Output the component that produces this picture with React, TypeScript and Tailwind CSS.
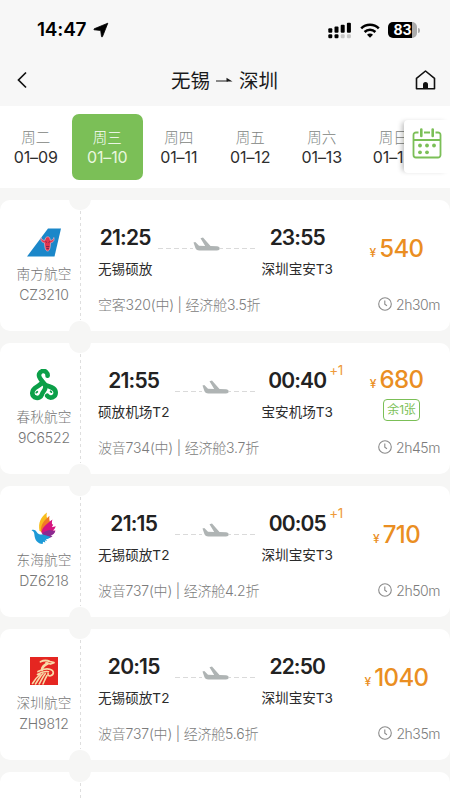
import { ReactNode } from "react";
import clsx from "clsx";

const days = [
  { week: "周二", date: "01–09" },
  { week: "周三", date: "01–10" },
  { week: "周四", date: "01–11" },
  { week: "周五", date: "01–12" },
  { week: "周六", date: "01–13" },
  { week: "周日", date: "01–14" },
];

const SouthernLogo = () => (
  <svg width="34" height="29" viewBox="0 0 34 29">
    <path d="M21 0.5H34L27.5 28.5H0Z" fill="#1b87c9" />
    <path
      d="M14.2 9.5c.2 2 1.8 3 3.6 2.8l1-2.6c1.2-1.2 2.8-1.2 3.8 0l.8 2.6c1.8.2 3.2-1 3.4-2.8 1 2.8-.6 4.9-3.2 5.3l-.4 4.2c-.6 3-1.4 4-2.6 4s-2.2-1-2.7-4l-.5-4.2c-2.7-.4-4.2-2.5-3.2-5.3Z"
      fill="#e2364f"
      stroke="#f3bfcd"
      strokeWidth="0.6"
    />
    <path d="M18.5 13.5l1.5 1M23 13.5l-1.5 1M19 18.5h3.4M19.5 20.5h2.4" stroke="#6b2347" strokeWidth="0.8" />
  </svg>
);

const SpringLogo = () => (
  <svg width="28" height="32" viewBox="0 0 28 32" fill="none" stroke="#0b9f48" strokeWidth="4.6" strokeLinecap="round">
    <path d="M17.6 6.8A4.3 4.3 0 1 0 9.7 8.6C10.8 11 13.5 13.2 15.2 16" />
    <path d="M11.3 14.3C9 18 2.5 17.8 2.3 23.8A4.9 4.9 0 0 0 11.8 25.7C12.3 22.8 15.8 21.5 15.5 17" />
    <path d="M14.5 15.5C18.5 18 25.7 17.5 25.7 23.8A4.8 4.8 0 0 1 17.2 26.8" />
    <path d="M7.3 22.8l-1 .8M20.6 22.3l.8.8" strokeWidth="1.8" />
  </svg>
);

const DonghaiLogo = () => (
  <svg width="26" height="33" viewBox="0 0 26 33">
    <path d="M8.5 19C7 11 9.500 5 16 .5c-.8 3-.5 5 1 7L11 20Z" fill="#f8bd1c" />
    <path d="M10 20C9.5 13 12.5 9 18.5 3.8c-.6 3.2 0 5 .9 6.7L13.5 21Z" fill="#f07a25" />
    <path d="M10.5 21c.5-6 4.5-8.5 10.900-13.500-.6 3.2-1 4.6.8 5.2l-1.4 2.5 4-1c-1 2.5-1.6 3.2-3 4.3l2.7.1C23 22.5 20 23.5 16 24Z" fill="#d5147f" />
    <path d="M11 21.5c2.5-2 5-3 8-3.500l5.200 1.200c-.9 2.600-2.600 3.800-4.700 4.300l2 .6c-2 2.300-5 2.400-8.500 1.400Z" fill="#8b2a90" />
    <path d="M.5 18.2c2-1 4-.3 5.200 1.700 1.500 2.300 3.300 3 6.300 2.600l7.500 2.200c-1 1.600-2.300 2.400-4.500 2.400l1 1.600-2.300-.3.700 2.200-2.400-.9-.3 2.300C6.500 31.500 3.800 28.500 3.300 22c-.2-1.800-.9-2.800-2.800-3.800Z" fill="#1d9ad7" />
  </svg>
);

const ShenzhenLogo = () => (
  <svg width="28" height="28" viewBox="0 0 28 28">
    <path d="M0 0h28v28H0Z" fill="#e52621" />
    <g fill="none" stroke="#f8d9a6" strokeLinecap="round" strokeLinejoin="round">
      <path d="M10.5 4.8c3-1.6 6-1.9 9.5-.3l4 1.2-3.5 1.3-4.5-1.2" strokeWidth="1.8" />
      <path d="M17.5 6.5c-3.300 1.800-5.600 3.600-5.400 6.200" strokeWidth="2.6" />
      <path d="M8 14.5c4-2 9-3.200 12.500-2 4.200 1.500 3.200 5.500.2 6.200-2 .4-3.200-.8-2.600-2.200" strokeWidth="1.7" />
      <path d="M7.5 17.5c4-2.700 8-3.400 11-2.800M13 16.500c-3 2.500-4.500 6-7.500 10.500M15.200 16.700c-2.200 2.800-3.700 6.300-6 10.300M17 18.500c-1.500 2.500-2.500 5-4 8.500M10 17.500C7 20 4.500 23 2.500 26.500" strokeWidth="1.6" />
    </g>
  </svg>
);

interface Flight {
  logo: ReactNode;
  airline: string;
  code: string;
  depTime: string;
  depPort: string;
  arrTime: string;
  arrPort: string;
  nextDay?: boolean;
  info: string;
  duration: string;
  price: string;
  left?: string;
}

const flights: Flight[] = [
  {
    logo: <SouthernLogo />,
    airline: "南方航空",
    code: "CZ3210",
    depTime: "21:25",
    depPort: "无锡硕放",
    arrTime: "23:55",
    arrPort: "深圳宝安T3",
    info: "空客320(中) | 经济舱3.5折",
    duration: "2h30m",
    price: "540",
  },
  {
    logo: <SpringLogo />,
    airline: "春秋航空",
    code: "9C6522",
    depTime: "21:55",
    depPort: "硕放机场T2",
    arrTime: "00:40",
    arrPort: "宝安机场T3",
    nextDay: true,
    info: "波音734(中) | 经济舱3.7折",
    duration: "2h45m",
    price: "680",
    left: "余1张",
  },
  {
    logo: <DonghaiLogo />,
    airline: "东海航空",
    code: "DZ6218",
    depTime: "21:15",
    depPort: "无锡硕放T2",
    arrTime: "00:05",
    arrPort: "深圳宝安T3",
    nextDay: true,
    info: "波音737(中) | 经济舱4.2折",
    duration: "2h50m",
    price: "710",
  },
  {
    logo: <ShenzhenLogo />,
    airline: "深圳航空",
    code: "ZH9812",
    depTime: "20:15",
    depPort: "无锡硕放T2",
    arrTime: "22:50",
    arrPort: "深圳宝安T3",
    info: "波音737(中) | 经济舱5.6折",
    duration: "2h35m",
    price: "1040",
  },
];

const StatusBar = () => (
  <div className="flex h-[54px] shrink-0 items-center justify-between pl-[37px] pr-[30px] pt-[6px]">
    <div className="flex items-center gap-[7px]">
      <span className="text-[19px] font-semibold leading-6 tracking-[-0.2px] text-black">14:47</span>
      <svg width="16" height="16" viewBox="0 0 16 16">
        <path
          d="M14.8 1.2 9.5 14.6c-.2.5-.9.4-1-.1L7.7 8.5 1.3 7.8c-.5-.1-.6-.8-.1-1Z"
          fill="#000"
          stroke="#000"
          strokeWidth="0.8"
          strokeLinejoin="round"
        />
      </svg>
    </div>
    <div className="flex items-center gap-[8px]">
      <svg width="24" height="17" viewBox="0 0 24 17">
        <rect x="0.3" y="6.2" width="4" height="4.6" rx="1" />
        <rect x="6.5" y="4.5" width="4" height="6.3" rx="1" />
        <rect x="12.7" y="2.7" width="4" height="8.1" rx="1" />
        <rect x="18.9" y="0.7" width="4" height="10.1" rx="1" />
        <rect x="0.3" y="12.3" width="4" height="4" rx="1.2" />
        <rect x="6.5" y="12.3" width="4" height="4" rx="1.2" />
        <rect x="12.7" y="12.3" width="4" height="4" rx="1.2" fill="#c8c8c8" />
        <rect x="18.9" y="12.3" width="4" height="4" rx="1.2" fill="#c8c8c8" />
      </svg>
      <svg width="20" height="15" viewBox="0 0 20 15" fill="none" stroke="#000" strokeWidth="2.5">
        <path d="M1.2 5.4a12.5 12.5 0 0 1 17.6 0" />
        <path d="M4.6 9a7.6 7.6 0 0 1 10.8 0" />
        <path d="M7 11.7a4.2 4.2 0 0 1 6 0L10 14.8Z" fill="#000" stroke="none" />
      </svg>
      <div className="flex items-center gap-[1px]">
        <div className="flex h-[16px] w-[29px] items-center justify-center rounded-[5px] bg-[linear-gradient(to_right,#000_83%,#ababab_83%)]">
          <span className="text-[14px] font-bold leading-none text-white">83</span>
        </div>
        <span className="h-[5px] w-[2px] rounded-r-full bg-[#ababab]" />
      </div>
    </div>
  </div>
);

const NavBar = () => (
  <div className="flex h-[52px] shrink-0 items-center justify-between pl-[17px] pr-[14px]">
    <svg width="17" height="18" viewBox="0 0 17 18" fill="none" stroke="#111" strokeWidth="1.7">
      <path d="M9 1.5 1.5 9 9 16.5" />
    </svg>
    <h1 className="flex items-center gap-[6px] pt-[2px] text-[19.5px] leading-7 text-[#1a1a1a]">
      无锡
      <svg width="17" height="8" viewBox="0 0 17 8">
        <path d="M0 4h12" stroke="#1a1a1a" strokeWidth="1" />
        <path d="M10.5 .8 16.5 4.5H10.5Z" fill="#1a1a1a" />
      </svg>
      深圳
    </h1>
    <svg width="21" height="20" viewBox="0 0 21 20" fill="none" stroke="#111" strokeWidth="1.6">
      <path d="M1.5 8.3 10.5 1l9 7.3V18.7h-18Z" strokeLinejoin="round" />
      <path d="M8 19v-4.500a2.500 2.500 0 0 1 5 0V19Z" fill="#111" stroke="none" />
    </svg>
  </div>
);

const CalendarIcon = () => (
  <svg width="30" height="31" viewBox="0 0 30 31" fill="none" stroke="#7bbf57" strokeWidth="1.8">
    <path d="M6.5 4.5H4A2.5 2.5 0 0 0 1.5 7v20A2.5 2.5 0 0 0 4 29.5h22a2.5 2.5 0 0 0 2.5-2.5V7A2.5 2.5 0 0 0 26 4.5h-2.5M12 4.5h6M1.5 12h27" />
    <path d="M9.3 1.5v6.5M20.7 1.5v6.5" strokeWidth="2.6" strokeLinecap="round" />
    <g fill="#7bbf57" stroke="none">
      <circle cx="8" cy="17.5" r="1.9" />
      <circle cx="15" cy="17.5" r="1.9" />
      <circle cx="22" cy="17.5" r="1.9" />
      <circle cx="8" cy="24.3" r="1.9" />
      <circle cx="15" cy="24.3" r="1.9" />
    </g>
  </svg>
);

const DateBar = () => (
  <div className="relative flex h-[82px] shrink-0 items-center overflow-hidden bg-white">
    {days.map((day, i) => (
      <button
        key={day.date}
        className={clsx(
          "flex h-[66px] w-[71.5px] shrink-0 flex-col items-center justify-center rounded-[7px]",
          i === 1 ? "bg-[#7bbf57] text-[#e9f7df]" : "text-[#2e2e2e]"
        )}
      >
        <span className={clsx("text-[14.5px] font-light leading-[20px]", i === 1 ? "text-white" : "text-[#7d8481]")}>
          {day.week}
        </span>
        <span className="text-[16px] leading-[19px] tracking-[-0.1px]">{day.date}</span>
      </button>
    ))}
    <div className="absolute right-0 top-[14px] flex h-[53px] w-[46px] items-center justify-center rounded-l-[4px] bg-white pb-[7px] shadow-[-4px_0_5px_-2px_rgba(0,0,0,0.25)]">
      <CalendarIcon />
    </div>
  </div>
);

const PlaneIcon = () => (
  <svg width="27" height="15" viewBox="0 0 27 15" fill="#afb4b4">
    <path d="M0.5 5.5 2.3 5 6 8.8 12.2 9 7.5 1.3 10 .5 17.5 8.9l6.5.4c1.7.2 2.7 1 2.7 2.1 0 1.3-1 2-2.7 2H6.5C4 13.4 3 12.7 2.4 11Z" />
  </svg>
);

const Ticket = ({ children }: { children?: ReactNode }) => (
  <div className="relative flex h-[131px] shrink-0 overflow-hidden rounded-[10px] bg-white">
    {children}
    <div className="absolute bottom-[11px] left-[80px] top-[11px] w-px bg-[repeating-linear-gradient(to_bottom,#dedede_0_3px,transparent_3px_6px)]" />
    <div className="absolute left-[69px] top-[-12px] size-[22px] rounded-full bg-[#f6f6f5]" />
    <div className="absolute bottom-[-12px] left-[69px] size-[22px] rounded-full bg-[#f6f6f5]" />
  </div>
);

const FlightCard = ({ flight }: { flight: Flight }) => (
  <Ticket>
    <div className="flex w-[80px] shrink-0 flex-col items-center pl-[8px] pt-[25px] font-light text-[#757575]">
      <div className="flex h-[34px] items-center justify-center">{flight.logo}</div>
      <span className="mt-[5px] text-[13.7px] leading-[21px]">{flight.airline}</span>
      <span className="text-[14px] leading-[20px] tracking-[-0.1px]">{flight.code}</span>
    </div>
    <div className="flex flex-1 flex-col pl-[18px] pr-[10px]">
      <div className="flex h-[88px]">
        <div className="flex w-[235px] shrink-0 pt-[26px]">
          <div className="flex flex-col items-center">
            <span className="text-[21px] font-semibold leading-[24px] tracking-[-0.8px] text-[#222]">{flight.depTime}</span>
            <span className="mt-[9px] whitespace-nowrap text-[13.6px] leading-[20px] text-[#2b2b2b]">{flight.depPort}</span>
          </div>
          <div className="mx-[6px] mt-[11px] flex h-[16px] flex-1 items-start">
            <div className="mt-[11px] h-px flex-1 bg-[repeating-linear-gradient(to_right,#dadada_0_5px,transparent_5px_8px)]" />
            <PlaneIcon />
            <div className="mt-[11px] h-px flex-1 bg-[repeating-linear-gradient(to_left,#dadada_0_5px,transparent_5px_8px)]" />
          </div>
          <div className="relative flex flex-col items-center">
            <span className="text-[21px] font-semibold leading-[24px] tracking-[-0.9px] text-[#222]">{flight.arrTime}</span>
            <span className="mt-[9px] whitespace-nowrap text-[13.6px] leading-[20px] text-[#2b2b2b]">{flight.arrPort}</span>
            {flight.nextDay && (
              <span className="absolute right-[-10px] top-[-7px] text-[13.5px] leading-[16px] tracking-[-0.3px] text-[#ee9a3a]">+1</span>
            )}
          </div>
        </div>
        <div className={clsx("flex flex-1 flex-col items-center justify-center pl-[20px]", flight.left ? "pt-[11px]" : "pt-[8px]")}>
          <div className="flex items-baseline gap-[3px] text-[#ea8e22]">
            <span className="text-[12px] font-medium leading-none">¥</span>
            <span className="text-[24px] font-medium leading-[29px] tracking-[-0.6px]">{flight.price}</span>
          </div>
          {flight.left && (
            <span className="ml-[10px] mt-[5px] flex h-[22px] w-[37px] items-center justify-center rounded-[4px] border border-[#7bbf57] text-[12px] leading-none tracking-[-0.2px] text-[#7bbf57]">
              {flight.left}
            </span>
          )}
        </div>
      </div>
      <div className="flex h-[32px] items-center justify-between whitespace-nowrap text-[14px] font-light text-[#7c7c7c]">
        <span className="tracking-[-0.2px]">{flight.info}</span>
        <span className="flex items-center gap-[4px] tracking-[-0.45px]">
          <svg width="14" height="14" viewBox="0 0 14 14" fill="none" stroke="#8a8a8a" strokeWidth="1.1">
            <circle cx="7" cy="7" r="6.3" />
            <path d="M6.8 3.5V7.3L9 8.7" />
          </svg>
          {flight.duration}
        </span>
      </div>
    </div>
  </Ticket>
);

const App = () => {
  return (
    <div className="flex h-[800px] w-[450px] flex-col overflow-hidden bg-[#f7f7f7] font-['Inter','Noto_Sans_CJK_SC',sans-serif]">
      <StatusBar />
      <NavBar />
      <DateBar />
      <div className="flex flex-1 flex-col gap-[12px] overflow-hidden bg-[#f6f6f5] pt-[12px]">
        {flights.map((flight) => (
          <FlightCard key={flight.code} flight={flight} />
        ))}
        <Ticket />
      </div>
    </div>
  );
};

export default App;
